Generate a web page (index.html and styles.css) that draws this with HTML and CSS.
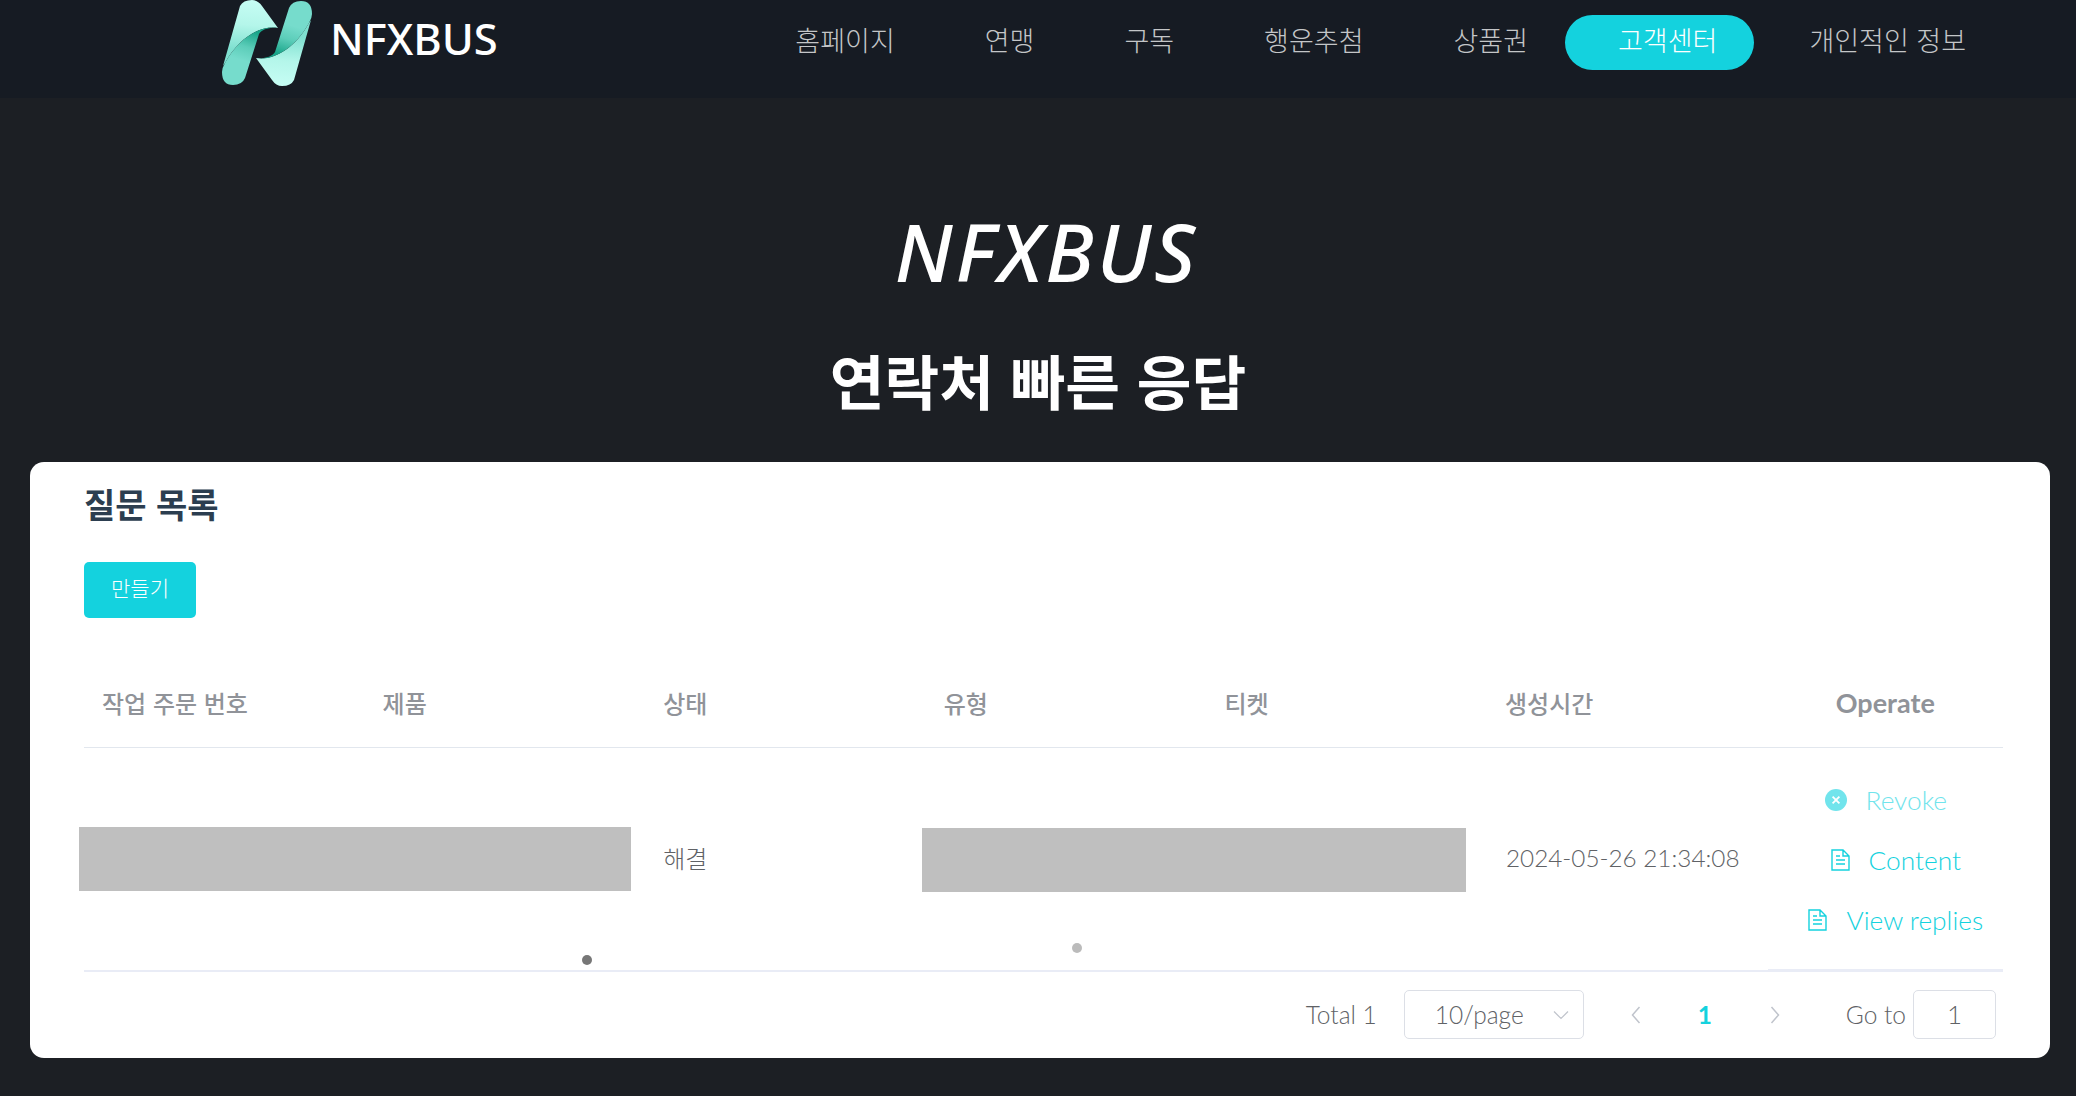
FILE: index.html
```html
<!DOCTYPE html>
<html lang="ko">
<head>
    <meta charset="UTF-8">
    <meta name="viewport" content="width=device-width">
    <title>NFXBUS</title>
    <link rel="stylesheet" href="styles.css">
</head>
<body>
    <header class="topbar">
        <a class="brand" href="#">
            <svg class="brand-mark" viewBox="0 0 90 86" aria-hidden="true">
                <defs>
                    <linearGradient id="bandLight" gradientUnits="userSpaceOnUse" x1="28" y1="0" x2="24" y2="50">
                        <stop offset="0" stop-color="#c6fdf4"/>
                        <stop offset="0.5" stop-color="#b4f6ea"/>
                        <stop offset="1" stop-color="#7fe0d0"/>
                    </linearGradient>
                    <linearGradient id="bandFold" gradientUnits="userSpaceOnUse" x1="28" y1="30" x2="19" y2="60">
                        <stop offset="0" stop-color="#17a488"/>
                        <stop offset="0.55" stop-color="#5ccdb9"/>
                        <stop offset="1" stop-color="#76dccc"/>
                    </linearGradient>
                    <g id="band">
                        <path fill="url(#bandLight)" d="M1 66L18 6Q21 0 30 0Q36 0 40 6L56 28C40 25 18 36 3 63Z"/>
                        <path fill="url(#bandFold)" d="M56 28C40 25 18 36 3 63Q0 68 0 72Q0 85 11 85Q20 85 23 78L37 34C40 29 48 27 56 28Z"/>
                    </g>
                </defs>
                <use href="#band"/>
                <use href="#band" transform="rotate(180 45 43)"/>
            </svg>
            <span class="brand-name">NFXBUS</span>
        </a>
        <nav class="menu">
            <a href="#">홈페이지</a>
            <a href="#">연맹</a>
            <a href="#">구독</a>
            <a href="#">행운추첨</a>
            <a href="#">상품권</a>
            <a href="#" class="active">고객센터</a>
            <a href="#">개인적인 정보</a>
        </nav>
    </header>

    <section class="hero">
        <h1>NFXBUS</h1>
        <h2>연락처 빠른 응답</h2>
    </section>

    <main class="card">
        <h3 class="card-title">질문 목록</h3>
        <button class="btn-create" type="button">만들기</button>

        <table class="tickets">
            <colgroup>
                <col class="col-std"><col class="col-std"><col class="col-std">
                <col class="col-std"><col class="col-std"><col class="col-std">
                <col class="col-ops">
            </colgroup>
            <thead>
                <tr>
                    <th>작업 주문 번호</th>
                    <th>제품</th>
                    <th>상태</th>
                    <th>유형</th>
                    <th>티켓</th>
                    <th>생성시간</th>
                    <th class="ops-head">Operate</th>
                </tr>
            </thead>
            <tbody>
                <tr>
                    <td></td>
                    <td></td>
                    <td>해결</td>
                    <td></td>
                    <td></td>
                    <td class="time">2024-05-26 21:34:08</td>
                    <td class="ops">
                        <a href="#" class="op op-revoke">
                            <svg viewBox="0 0 22 22" aria-hidden="true">
                                <circle cx="11" cy="11" r="11" fill="currentColor"/>
                                <path d="M7.6 7.6l6.8 6.8M14.4 7.6l-6.8 6.8" stroke="#fff" stroke-width="1.8" fill="none"/>
                            </svg>
                            Revoke
                        </a>
                        <a href="#" class="op op-shift">
                            <svg viewBox="0 0 19 22" aria-hidden="true">
                                <path d="M1 1h11l6 6v14H1z M12 1v6h6 M5 7h4 M5 11h9 M5 15h9" stroke="currentColor" stroke-width="1.4" fill="none"/>
                            </svg>
                            Content
                        </a>
                        <a href="#" class="op op-shift">
                            <svg viewBox="0 0 19 22" aria-hidden="true">
                                <path d="M1 1h11l6 6v14H1z M12 1v6h6 M5 7h4 M5 11h9 M5 15h9" stroke="currentColor" stroke-width="1.4" fill="none"/>
                            </svg>
                            View replies
                        </a>
                    </td>
                </tr>
            </tbody>
        </table>

        <div class="pager">
            <span class="total">Total 1</span>
            <div class="size-select">
                <span>10/page</span>
                <svg viewBox="0 0 16 10" aria-hidden="true"><path d="M1 1.5l7 7 7-7" stroke="#c0c4cc" stroke-width="1.2" fill="none"/></svg>
            </div>
            <svg class="arrow" viewBox="0 0 10 18" aria-hidden="true"><path d="M8.5 1L1.5 9l7 8" stroke="#c0c4cc" stroke-width="1.5" fill="none"/></svg>
            <span class="page-num">1</span>
            <svg class="arrow" viewBox="0 0 10 18" aria-hidden="true"><path d="M1.5 1l7 8-7 8" stroke="#c0c4cc" stroke-width="1.5" fill="none"/></svg>
            <span class="goto">Go to</span>
            <div class="goto-box">1</div>
        </div>

        <!-- redacted blocks and stray dots sit over the table -->
        <div class="mask mask-a"></div>
        <div class="mask mask-b"></div>
        <div class="dot dot-a"></div>
        <div class="dot dot-b"></div>
    </main>
</body>
</html>
```

FILE: styles.css
```css
* {
    box-sizing: border-box;
}
html, body {
    height: 100%;
}
body {
    margin: 0;
    overflow: hidden;
    background-color: #1c1f24;
    font-family: Lato, "Noto Sans CJK KR", sans-serif;
    color: #606266;
}
a {
    text-decoration: none;
    color: inherit;
}

.topbar {
    display: flex;
    justify-content: space-between;
    height: 98px;
    padding: 0 65px 0 222px;
    background-color: #161b23;
}
.brand {
    display: flex;
    align-items: flex-start;
}
.brand-mark {
    width: 90px;
    height: 86px;
    margin-right: 18px;
}
.brand-name {
    margin-top: 8px;
    font-family: "Noto Sans", sans-serif;
    font-size: 43.5px;
    font-weight: 500;
    line-height: 60px;
    color: #fff;
}
.menu {
    display: flex;
    align-items: flex-start;
    padding-top: 15px;
    font-family: "Noto Sans CJK KR", sans-serif;
    font-size: 27px;
    font-weight: 300;
    color: #c4c6c8;
}
.menu a {
    height: 55px;
    padding: 0 45px;
    line-height: 50px;
    white-space: nowrap;
}
.menu a:nth-child(6) {
    margin-right: 10px;
}
.menu a.active {
    margin-left: -8px;
    padding: 0 37px 0 53px;
    border-radius: 28px;
    background-color: #14d2de;
    color: #fff;
}

.hero {
    height: 364px;
    padding-top: 98px;
    color: #fff;
    text-align: center;
}
.hero h1 {
    margin: 0;
    padding-left: 17px;
    font-family: "Noto Sans", sans-serif;
    font-size: 80px;
    font-style: italic;
    font-weight: 500;
    letter-spacing: 3px;
    line-height: 110px;
}
.hero h2 {
    margin: 33px 0 0;
    font-family: "Noto Sans CJK KR", sans-serif;
    font-size: 59.5px;
    font-weight: 700;
    line-height: 80px;
}

.card {
    position: relative;
    height: 596px;
    margin: 0 26px 0 30px;
    padding: 18px 47px 0 54px;
    border-radius: 14px;
    background-color: #fff;
}
.card-title {
    margin: 0;
    font-family: "Noto Sans CJK KR", sans-serif;
    font-size: 34px;
    font-weight: 700;
    line-height: 48px;
    color: #2c3e50;
}
.btn-create {
    display: block;
    width: 112px;
    height: 56px;
    margin-top: 34px;
    padding: 0 0 6px;
    border: 0;
    border-radius: 5px;
    background-color: #14d2de;
    font-family: "Noto Sans CJK KR", sans-serif;
    font-size: 21px;
    font-weight: 300;
    color: #fff;
}

.tickets {
    width: 100%;
    margin-top: 46px;
    border-collapse: separate;
    border-spacing: 0;
    table-layout: fixed;
    font-family: Lato, "Noto Sans CJK KR", sans-serif;
}
.col-std {
    width: 280.6px;
}
.tickets th {
    height: 84px;
    padding: 0 18px 6px;
    border-bottom: 1px solid #e2e7ee;
    font-family: "Noto Sans CJK KR", sans-serif;
    font-size: 24px;
    font-weight: 500;
    text-align: left;
    color: #909399;
}
.tickets th.ops-head {
    font-family: Lato, sans-serif;
    font-size: 27px;
    font-weight: 700;
    text-align: center;
}
.tickets td {
    height: 224px;
    padding: 0 18px 3px;
    border-bottom: 2px solid #e9ecf6;
    font-family: "Noto Sans CJK KR", sans-serif;
    font-size: 24px;
    font-weight: 300;
}
.tickets td.time {
    padding-left: 19px;
    font-family: Lato, sans-serif;
    font-size: 24.3px;
    white-space: nowrap;
}
.tickets td.ops {
    padding: 3px 0 0 1px;
    border-bottom-width: 3px;
    font-family: Lato, sans-serif;
}
.op {
    display: flex;
    align-items: center;
    justify-content: center;
    gap: 19px;
    height: 60px;
    font-size: 26.3px;
    color: #14d2de;
}
.op svg {
    height: 22px;
}
.op-revoke {
    color: #71e4ec;
}
.op-shift {
    margin-left: 20px;
}

.pager {
    display: flex;
    align-items: center;
    height: 49px;
    margin-top: 18px;
    font-size: 24.5px;
    font-weight: 300;
    line-height: 44px;
}
.total {
    margin-left: auto;
    margin-right: 27px;
}
.size-select {
    display: flex;
    align-items: center;
    justify-content: space-between;
    width: 180px;
    height: 49px;
    padding: 0 14px 0 30px;
    border: 1px solid #dcdfe6;
    border-radius: 5px;
}
.size-select svg {
    width: 16px;
}
.arrow {
    width: 10px;
    height: 18px;
    margin-left: 47px;
}
.page-num {
    width: 128px;
    font-weight: 700;
    text-align: center;
    color: #14d2de;
}
.page-num + .arrow {
    margin-left: 1px;
}
.goto {
    margin-left: 66px;
    margin-right: 7px;
}
.goto-box {
    width: 83px;
    height: 49px;
    margin-right: 7px;
    border: 1px solid #dcdfe6;
    border-radius: 5px;
    font-size: 26px;
    line-height: 46px;
    text-align: center;
}

.mask {
    position: absolute;
    height: 64px;
    background-color: #bfbfbf;
}
.mask-a {
    top: 365px;
    left: 49px;
    width: 552px;
}
.mask-b {
    top: 366px;
    left: 892px;
    width: 544px;
}
.dot {
    position: absolute;
    width: 10px;
    height: 10px;
    border-radius: 50%;
}
.dot-a {
    top: 493px;
    left: 552px;
    background-color: #777;
}
.dot-b {
    top: 481px;
    left: 1042px;
    background-color: #bbb;
}
```
